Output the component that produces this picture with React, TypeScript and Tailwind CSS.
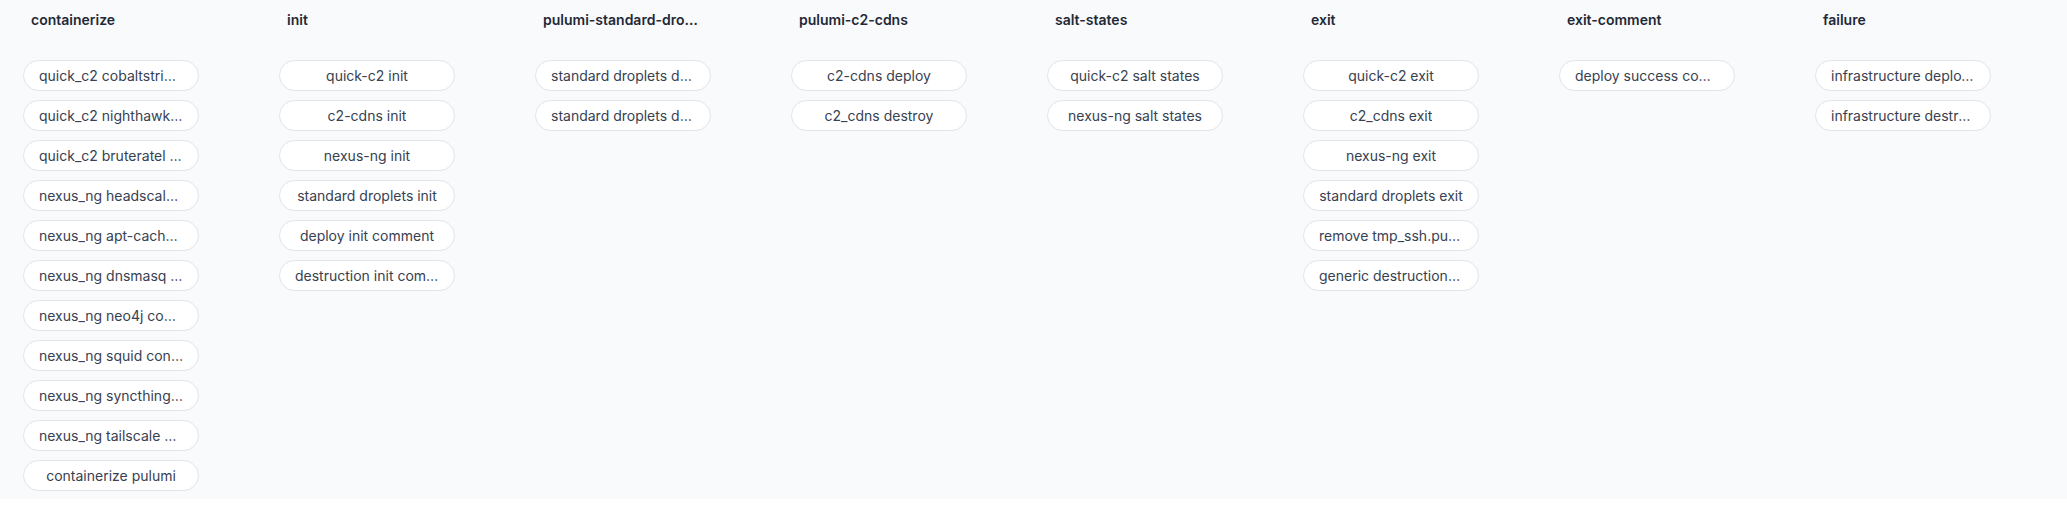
import React from "react";

const columns = [
  {
    title: "containerize",
    items: [
      "quick_c2 cobaltstrike container",
      "quick_c2 nighthawk container",
      "quick_c2 bruteratel container",
      "nexus_ng headscale container",
      "nexus_ng apt-cacher container",
      "nexus_ng dnsmasq container",
      "nexus_ng neo4j container",
      "nexus_ng squid container",
      "nexus_ng syncthing container",
      "nexus_ng tailscale container",
      "containerize pulumi",
    ],
  },
  {
    title: "init",
    items: [
      "quick-c2 init",
      "c2-cdns init",
      "nexus-ng init",
      "standard droplets init",
      "deploy init comment",
      "destruction init comment",
    ],
  },
  {
    title: "pulumi-standard-droplets",
    items: ["standard droplets deploy", "standard droplets destroy"],
  },
  {
    title: "pulumi-c2-cdns",
    items: ["c2-cdns deploy", "c2_cdns destroy"],
  },
  {
    title: "salt-states",
    items: ["quick-c2 salt states", "nexus-ng salt states"],
  },
  {
    title: "exit",
    items: [
      "quick-c2 exit",
      "c2_cdns exit",
      "nexus-ng exit",
      "standard droplets exit",
      "remove tmp_ssh.pub key",
      "generic destruction exit",
    ],
  },
  {
    title: "exit-comment",
    items: ["deploy success comment"],
  },
  {
    title: "failure",
    items: ["infrastructure deploy failure", "infrastructure destroy failure"],
  },
];

export default function App() {
  return (
    <div className="w-full bg-white" style={{ fontFamily: "Inter, 'Noto Sans', sans-serif" }}>
      <div className="h-[499px] bg-[#f9fafb] pl-[23px] pt-[10px] flex gap-[80px]">
        {columns.map((col) => (
          <div key={col.title} className="w-[176px] shrink-0 flex flex-col">
            <div className="px-2 h-5 text-sm leading-5 font-semibold text-[#1f2937] truncate">
              {col.title}
            </div>
            <div className="mt-[30px] flex flex-col gap-[9px]">
              {col.items.map((item) => (
                <div
                  key={item}
                  title={item}
                  className="h-[31px] rounded-full border border-[#e2e4e8] bg-white px-[15px] flex items-center justify-center"
                >
                  <span className="truncate text-sm text-[#374151]">{item}</span>
                </div>
              ))}
            </div>
          </div>
        ))}
      </div>
    </div>
  );
}
